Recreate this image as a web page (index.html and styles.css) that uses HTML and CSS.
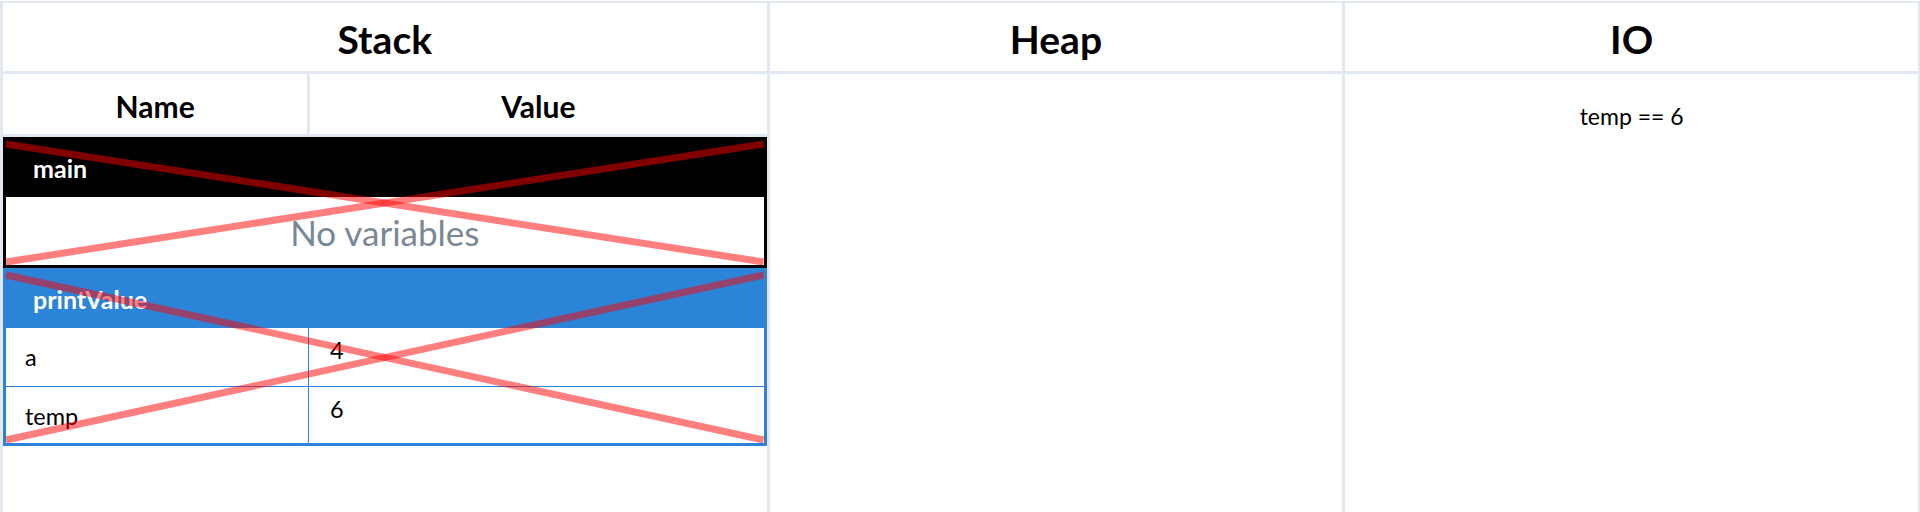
FILE: index.html
```html
<!DOCTYPE html>
<html lang="en">
<head>
<meta charset="utf-8">
<title>Memory visualizer</title>
<link rel="stylesheet" href="styles.css">
</head>
<body>
<div class="viz">
  <div class="col-head">Stack</div>
  <div class="col-head">Heap</div>
  <div class="col-head">IO</div>

  <div class="cell stack-cell">
    <div class="stack-head">
      <div class="sh-cell">Name</div>
      <div class="sh-cell">Value</div>
    </div>
    <div class="frames">
      <div class="frame frame-done">
        <div class="frame-title">main</div>
        <div class="frame-empty">No variables</div>
        <svg class="x-mark" viewBox="0 0 100 100" preserveAspectRatio="none">
          <line x1="0" y1="0" x2="100" y2="100"/>
          <line x1="0" y1="100" x2="100" y2="0"/>
        </svg>
      </div>
      <div class="frame frame-active">
        <div class="frame-title">printValue</div>
        <div class="var-row">
          <div class="var-name">a</div>
          <div class="var-value">4</div>
        </div>
        <div class="var-row var-row-next">
          <div class="var-name">temp</div>
          <div class="var-value">6</div>
        </div>
        <svg class="x-mark" viewBox="0 0 100 100" preserveAspectRatio="none">
          <line x1="0" y1="0" x2="100" y2="100"/>
          <line x1="0" y1="100" x2="100" y2="0"/>
        </svg>
      </div>
    </div>
  </div>
  <div class="cell heap-cell"></div>
  <div class="cell io-cell">
    <div class="io-line">temp == 6</div>
  </div>
</div>
</body>
</html>
```

FILE: styles.css
```css
html, body {
  margin: 0;
  padding: 0;
  background: #ffffff;
}

body {
  font-family: "Lato", "Liberation Sans", sans-serif;
  color: #000000;
}

.viz {
  box-sizing: border-box;
  margin-top: 1px;
  height: 511px;
  padding: 2px 2px 0 3px;
  background: #e2e8f0;
  display: grid;
  grid-template-columns: 40fr 30fr 30fr;
  grid-template-rows: 68px 1fr;
  column-gap: 3px;
  row-gap: 3px;
}

.col-head {
  background: #ffffff;
  display: flex;
  align-items: center;
  justify-content: center;
  font-weight: 700;
  font-size: 39px;
  padding-top: 4px;
  box-sizing: border-box;
}

.cell {
  background: #ffffff;
  min-height: 0;
}

.stack-cell {
  background: #e2e8f0;
  display: flex;
  flex-direction: column;
  gap: 3px;
}

.stack-head {
  display: grid;
  grid-template-columns: 2fr 3fr;
  column-gap: 3px;
  height: 60px;
}

.sh-cell {
  background: #ffffff;
  display: flex;
  align-items: center;
  justify-content: center;
  font-size: 30px;
  font-weight: 700;
  padding-top: 3px;
  box-sizing: border-box;
}

.frames {
  flex: 1;
  background: #ffffff;
}

.frame {
  position: relative;
  border: 3px solid #000000;
}

.frame-done {
  border-color: #000000;
}

.frame-active {
  border-color: #2b84d8;
}

.frame-title {
  height: 57px;
  box-sizing: border-box;
  padding: 13px 0 0 27px;
  font-size: 25px;
  font-weight: 700;
  color: #ffffff;
}

.frame-done .frame-title {
  background: #000000;
}

.frame-active .frame-title {
  background: #2b84d8;
}

.frame-empty {
  height: 68px;
  display: flex;
  align-items: center;
  justify-content: center;
  font-size: 35px;
  color: #7a8795;
  padding-top: 1px;
  box-sizing: border-box;
}

.var-row {
  display: grid;
  grid-template-columns: 303px 1fr;
  height: 58px;
  box-sizing: border-box;
}

.var-row-next {
  height: 57px;
  border-top: 1px solid #2b84d8;
}

.var-name {
  border-right: 1px solid #2b84d8;
  padding: 15px 0 0 19px;
  font-size: 23.5px;
}

.var-value {
  padding: 8px 0 0 21px;
  font-size: 23.5px;
}

.x-mark {
  position: absolute;
  left: 0;
  top: 3.5px;
  width: 100%;
  height: calc(100% - 7px);
  overflow: visible;
  pointer-events: none;
}

.x-mark line {
  stroke: rgba(255, 0, 0, 0.5);
  stroke-width: 7px;
  vector-effect: non-scaling-stroke;
}

.io-line {
  padding-top: 28px;
  font-size: 23px;
}

.io-cell {
  display: flex;
  justify-content: center;
}
```
